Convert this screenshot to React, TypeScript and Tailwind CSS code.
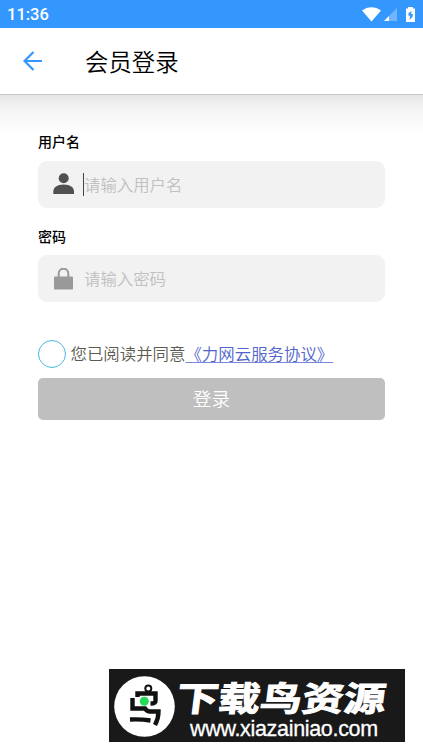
import { useState } from 'react'

function PersonIcon() {
  return (
    <svg width="22" height="22" viewBox="0 0 22 22" fill="#505050">
      <circle cx="10.7" cy="5.2" r="5" />
      <path d="M0.3 21v-2.2C0.3 14.500 4 11.500 10.700 11.500S21 14.500 21 18.800V21z" />
    </svg>
  )
}

function LockIcon() {
  return (
    <svg width="22" height="22" viewBox="0 0 22 22">
      <path d="M5.700 9V5.500a4.800 4.800 0 0 1 9.600 0V9" fill="none" stroke="#999" strokeWidth="2" />
      <rect x="1" y="8.400" width="19" height="13.200" rx="1.200" fill="#999" />
    </svg>
  )
}

const fields = [
  { id: 'username', label: '用户名', placeholder: '请输入用户名', type: 'text', icon: PersonIcon },
  { id: 'password', label: '密码', placeholder: '请输入密码', type: 'password', icon: LockIcon },
]

function StatusBar() {
  return (
    <div className="flex h-7 items-center justify-between bg-[#3497fd] pl-[7px] pr-2 text-white">
      <span className="pt-[3px] font-[Roboto] text-[16.500px] font-medium leading-none">11:36</span>
      <div className="flex items-center">
        <svg width="19" height="15" viewBox="0 0 19 15" fill="#fff">
          <path d="M0 3.600C5.500-1 13.500-1 19 3.600L9.500 14.600z" />
        </svg>
        <svg className="ml-[3px]" width="13" height="13" viewBox="0 0 13 13">
          <path d="M0 13L13 0v13z" fill="#fff" opacity=".3" />
          <path d="M0 13l5-5v5z" fill="#fff" />
        </svg>
        <svg className="ml-[9px]" width="9" height="15" viewBox="0 0 9 15">
          <path d="M2 0h5v1.500h2V15H0V1.500h2z" fill="#fff" />
          <path d="M5.800 4L2.500 6v2.800h1.700L3.500 13l3.200-3.500V7H5z" fill="#3497fd" />
        </svg>
      </div>
    </div>
  )
}

function Banner() {
  return (
    <div className="ml-[109px] mt-auto mb-2.5 flex h-[73px] w-[296px] shrink-0 bg-[#191919] text-white">
      <svg className="ml-[5px] mt-[7px] shrink-0" width="61" height="61" viewBox="0 0 61 61">
        <circle cx="30.500" cy="30.500" r="30.300" fill="#fff" />
        <g fill="none" stroke="#111" strokeWidth="4.400">
          <circle cx="34.300" cy="12.500" r="3" strokeWidth="2" />
          <path d="M23.500 21v-3.500H41.500V25q0 2.500-5 2.500" />
          <path d="M18.500 22v10.500h12.500q2 3 5 3h8.500q0 7-3.500 13.500" />
          <path d="M16 43.500q11-.5 20.500 1" />
        </g>
        <circle cx="30.300" cy="25.300" r="4.500" fill="#25d95b" />
      </svg>
      <div className="ml-[2px] mt-[9px]">
        <div className="h-[38px] origin-left -skew-x-6 scale-x-[1.230] whitespace-nowrap font-['Noto_Sans_CJK_SC',sans-serif] text-[34px] font-bold leading-[38px] [-webkit-text-stroke:1px_#fff]">
          下载鸟资源
        </div>
        <div className="ml-[13px] mt-[2px] whitespace-nowrap font-['Liberation_Sans',sans-serif] text-[21.500px] leading-[22px] tracking-[-0.32px] [-webkit-text-stroke:0.3px_#fff]">
          www.xiazainiao.com
        </div>
      </div>
    </div>
  )
}

export default function App() {
  const [agreed, setAgreed] = useState(false)

  return (
    <div className="flex h-[752px] w-[423px] flex-col overflow-hidden bg-white font-['Noto_Sans_CJK_SC',sans-serif] font-[350]">
      <StatusBar />

      <header className="flex h-[67px] shrink-0 items-center border-b border-[#c6c6c6] pl-[23px]">
        <button aria-label="返回">
          <svg width="20" height="20" viewBox="0 0 20 20" fill="none" stroke="#3497fd" strokeWidth="2.200">
            <path d="M19 10H2M10.500 1L1.500 10l9 9" />
          </svg>
        </button>
        <h1 className="ml-[42px] text-[23.400px] font-[350] leading-[34px] text-black">会员登录</h1>
      </header>

      <main className="bg-[linear-gradient(to_bottom,#e6e6e6_0px,#f4f4f4_14px,#fbfbfb_28px,#fff_42px)] px-[38px] pt-9">
        {fields.map(field => {
          const Icon = field.icon
          return (
            <div key={field.id} className="mb-[18px]">
              <label htmlFor={field.id} className="block h-[29.500px] text-sm font-medium text-black">
                {field.label}
              </label>
              <div className="flex h-[47px] items-center rounded-[9px] bg-[#f2f2f2] pl-[15px]">
                <Icon />
                <span className={`ml-2 h-[23px] w-px ${field.id === 'username' ? 'bg-[#444]' : ''}`} />
                <input
                  id={field.id}
                  type={field.type}
                  placeholder={field.placeholder}
                  className="min-w-0 flex-1 bg-transparent text-[16.400px] text-black outline-none placeholder:text-[#c0c0c0]"
                />
              </div>
            </div>
          )
        })}

        <div className="mt-[38px] flex h-7 items-center text-[16.430px] text-[#5c5b50]">
          <button
            aria-label="同意协议"
            onClick={() => setAgreed(!agreed)}
            className={`mr-[5px] size-[27.500px] shrink-0 rounded-full border border-[#4db8df] ${agreed ? 'bg-[#4db8df]' : ''}`}
          />
          <span className="whitespace-nowrap pb-px">
            您已阅读并同意
            <a className="text-[#5064cc] underline decoration-[#7a88dc] decoration-1 underline-offset-2">《力网云服务协议》</a>
          </span>
        </div>

        <button className="mt-[10px] flex h-[42px] w-full items-center justify-center rounded-[5px] bg-[#bfbfbf] pb-px text-[18.700px] text-white">
          登录
        </button>
      </main>

      <Banner />
    </div>
  )
}
